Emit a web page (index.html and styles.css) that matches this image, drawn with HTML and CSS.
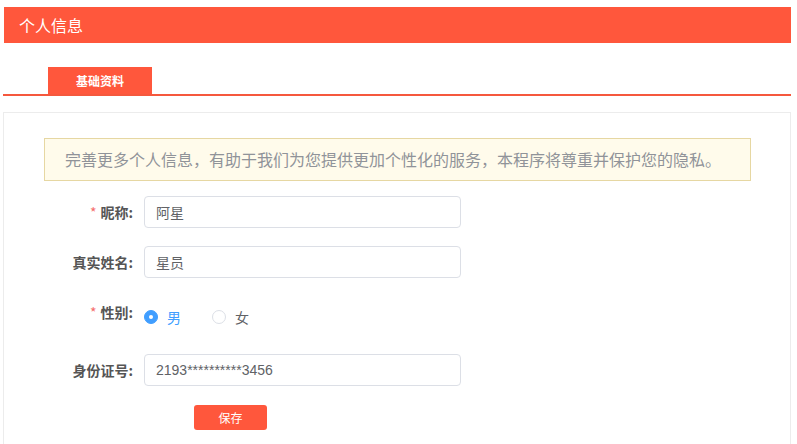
FILE: index.html
```html
<!DOCTYPE html>
<html lang="zh-CN">
<head>
  <meta charset="UTF-8" />
  <meta name="viewport" content="width=device-width, initial-scale=1.0"/>
  <title>个人信息</title>
  <link rel="stylesheet" href="styles.css">
</head>
<body>

  <div class="page">
    <div class="header">个人信息</div>

    <div class="tabs">
      <div class="tab active">基础资料</div>
    </div>

    <div class="panel">
      <div class="notice">完善更多个人信息，有助于我们为您提供更加个性化的服务，本程序将尊重并保护您的隐私。</div>

      <div class="form">
        <div class="form-row">
          <label class="form-label"><span class="required">*</span>昵称:</label>
          <input class="form-input" type="text" value="阿星">
        </div>

        <div class="form-row">
          <label class="form-label">真实姓名:</label>
          <input class="form-input" type="text" value="星员">
        </div>

        <div class="form-row form-row-tall">
          <label class="form-label"><span class="required">*</span>性别:</label>
          <div class="radio-group">
            <span class="radio checked"><span class="radio-dot"></span>男</span>
            <span class="radio"><span class="radio-dot"></span>女</span>
          </div>
        </div>

        <div class="form-row">
          <label class="form-label">身份证号:</label>
          <input class="form-input" type="text" value="2193**********3456">
        </div>

        <div class="form-actions">
          <button class="btn-save">保存</button>
        </div>
      </div>
    </div>
  </div>

</body>
</html>
```

FILE: styles.css
```css
html, body {
  overflow: hidden;
}
body {
  font-family: "Noto Sans CJK SC", "Liberation Sans", sans-serif;
  margin: 0;
  background: #fff;
  color: #606266;
}
.page {
  padding: 7px 6px 0 4px;
}
.header {
  background-color: #ff573c;
  color: #fff;
  height: 36px;
  line-height: 36px;
  font-size: 16px;
  padding-left: 15px;
}
.tabs {
  display: flex;
  margin-top: 24px;
  padding-left: 45px;
  border-bottom: 2px solid #f5583d;
  margin-left: -1px;
}
.tab {
  width: 104px;
  height: 27px;
  line-height: 27px;
  text-align: center;
  font-size: 12px;
  font-weight: bold;
  color: #fff;
}
.tab.active {
  background-color: #ff573c;
}
.panel {
  margin-top: 16px;
  margin-left: -1px;
  border: 1px solid #ececec;
  padding: 25px 0 20px;
}
.notice {
  margin-left: 40px;
  width: 685px;
  height: 41px;
  line-height: 41px;
  padding-left: 20px;
  background: #fffbeb;
  border: 1px solid #e6d7a2;
  color: #909399;
  font-size: 16px;
  white-space: nowrap;
}
.form {
  margin-top: 15px;
}
.form-row {
  display: flex;
  align-items: flex-start;
  margin-bottom: 18px;
}
.form-row-tall {
  height: 40px;
}
.form-label {
  width: 129px;
  margin-right: 11px;
  text-align: right;
  font-size: 14px;
  font-weight: bold;
  line-height: 32px;
  color: #555;
}
.required {
  color: #f56c6c;
  font-weight: normal;
  margin-right: 4px;
}
.form-input {
  width: 317px;
  height: 32px;
  box-sizing: border-box;
  border: 1px solid #dcdfe6;
  border-radius: 4px;
  padding: 0 11px;
  font-family: "Liberation Sans", "Noto Sans CJK SC", sans-serif;
  font-size: 14px;
  color: #606266;
  outline: none;
}
.radio-group {
  display: flex;
  align-items: center;
  height: 32px;
  margin-top: 5px;
}
.radio {
  display: flex;
  align-items: center;
  font-size: 14px;
  color: #606266;
  margin-right: 31px;
}
.radio-dot {
  width: 14px;
  height: 14px;
  box-sizing: border-box;
  border: 1px solid #dcdfe6;
  border-radius: 50%;
  background: #fff;
  margin-right: 9px;
  position: relative;
}
.radio.checked {
  color: #409eff;
}
.radio.checked .radio-dot {
  background: #409eff;
  border-color: #409eff;
}
.radio.checked .radio-dot::after {
  content: "";
  position: absolute;
  left: 4px;
  top: 4px;
  width: 4px;
  height: 4px;
  border-radius: 50%;
  background: #fff;
}
.form-actions {
  padding-left: 190px;
}
.btn-save {
  width: 73px;
  height: 25px;
  border: none;
  border-radius: 3px;
  background-color: #ff573c;
  color: #fff;
  font-family: "Noto Sans CJK SC", sans-serif;
  font-size: 12px;
  cursor: pointer;
  padding: 0;
}
```
